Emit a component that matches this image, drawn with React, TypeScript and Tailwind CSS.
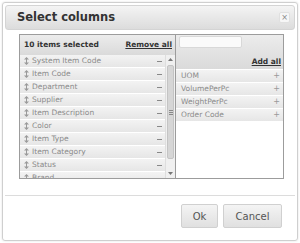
import React from "react";

const selected = [
  "System Item Code",
  "Item Code",
  "Department",
  "Supplier",
  "Item Description",
  "Color",
  "Item Type",
  "Item Category",
  "Status",
  "Brand",
];

const available = ["UOM", "VolumePerPc", "WeightPerPc", "Order Code"];

function Grip() {
  return (
    <svg width="5" height="8" viewBox="0 0 5 8" className="shrink-0">
      <path d="M2.5 0 L5 2.5 H0 Z M2.5 8 L5 5.5 H0 Z" fill="#9a9a9a" />
      <rect x="2" y="2" width="1" height="4" fill="#9a9a9a" />
    </svg>
  );
}

export default function App() {
  return (
    <div className="w-[300px] h-[243px] bg-white p-[2px] font-['DejaVu_Sans',sans-serif] overflow-hidden">
      <div className="h-[239px] border border-[#cfcfcf] rounded-[3px] p-[2px] flex flex-col shadow-[0_0_2px_rgba(0,0,0,0.15)]">
        {/* title bar */}
        <div className="h-[25px] shrink-0 flex items-center justify-between pl-[11px] pr-[4px] rounded-[3px] border border-[#d4d4d4] bg-gradient-to-b from-[#f4f4f4] to-[#dcdcdc]">
          <span className="text-[11.5px] font-bold text-[#333]">Select columns</span>
          <span className="w-[11px] h-[11px] flex items-center justify-center bg-[#f6f6f6] border border-[#e0e0e0] rounded-[2px] text-[8px] leading-none text-[#888]">
            ×
          </span>
        </div>

        {/* panels */}
        <div className="mt-[4px] ml-[14px] mr-[11px] h-[145px] border border-[#9c9c9c] flex">
          {/* selected list */}
          <div className="w-[156px] border-r border-[#9c9c9c] flex flex-col">
            <div className="h-[20px] shrink-0 flex items-center justify-between pl-[4px] pr-[3px] bg-gradient-to-b from-[#ececec] to-[#dadada]">
              <span className="text-[7.5px] font-bold text-[#333]">10 items selected</span>
              <span className="text-[7.5px] font-bold text-[#333] underline">Remove all</span>
            </div>
            <div className="flex-1 flex overflow-hidden">
              <div className="flex-1 flex flex-col overflow-hidden">
                {selected.map((s) => (
                  <div
                    key={s}
                    className="h-[13px] shrink-0 flex items-center pl-[4px] pr-[3px] gap-[3px] border-b border-white bg-gradient-to-b from-[#f3f3f3] to-[#e6e6e6]"
                  >
                    <Grip />
                    <span className="flex-1 text-[7.5px] text-[#8a8a8a] whitespace-nowrap">{s}</span>
                    <span className="w-[5px] h-[1px] bg-[#888]" />
                  </div>
                ))}
              </div>
              {/* scrollbar */}
              <div className="w-[10px] shrink-0 flex flex-col bg-[#f0f0f0] border-l border-[#dedede]">
                <div className="h-[9px] flex items-center justify-center">
                  <svg width="5" height="3" viewBox="0 0 5 3">
                    <path d="M2.5 0 L5 3 H0 Z" fill="#777" />
                  </svg>
                </div>
                <div className="flex-1 mx-[1px] my-[1px] mb-[10px] rounded-[2px] bg-[#d6d6d6] border border-[#c4c4c4] flex items-center justify-center">
                  <div className="flex flex-col gap-[1px]">
                    <span className="w-[4px] h-[1px] bg-[#888]" />
                    <span className="w-[4px] h-[1px] bg-[#888]" />
                    <span className="w-[4px] h-[1px] bg-[#888]" />
                  </div>
                </div>
                <div className="h-[9px] flex items-center justify-center">
                  <svg width="5" height="3" viewBox="0 0 5 3">
                    <path d="M0 0 H5 L2.5 3 Z" fill="#777" />
                  </svg>
                </div>
              </div>
            </div>
          </div>

          {/* available list */}
          <div className="flex-1 flex flex-col">
            <div className="h-[34px] shrink-0 flex flex-col justify-between pl-[3px] pr-[2px] pt-[1px] pb-[2px] bg-gradient-to-b from-[#ececec] to-[#dadada]">
              <div className="w-[63px] h-[12px] bg-[#fafafa] border border-[#d8d8d8] rounded-[2px]" />
              <span className="self-end text-[7.5px] font-bold text-[#333] underline">Add all</span>
            </div>
            <div className="flex flex-col pt-[1px]">
              {available.map((s) => (
                <div
                  key={s}
                  className="h-[13px] flex items-center justify-between pl-[5px] pr-[3px] border-b border-white bg-gradient-to-b from-[#f3f3f3] to-[#e6e6e6]"
                >
                  <span className="text-[7.5px] text-[#8a8a8a]">{s}</span>
                  <span className="text-[8px] leading-none text-[#999]">+</span>
                </div>
              ))}
            </div>
          </div>
        </div>

        {/* footer */}
        <div className="mt-[16px] border-t border-[#dcdcdc] flex-1 flex justify-end items-start pt-[8px] pr-[13px] gap-[5px]">
          <button className="w-[37px] h-[24px] rounded-[2px] border border-[#d0d0d0] bg-gradient-to-b from-[#f4f4f4] to-[#e0e0e0] text-[10px] text-[#555]">
            Ok
          </button>
          <button className="w-[59px] h-[24px] rounded-[2px] border border-[#d0d0d0] bg-gradient-to-b from-[#f4f4f4] to-[#e0e0e0] text-[10px] text-[#555]">
            Cancel
          </button>
        </div>
      </div>
    </div>
  );
}
